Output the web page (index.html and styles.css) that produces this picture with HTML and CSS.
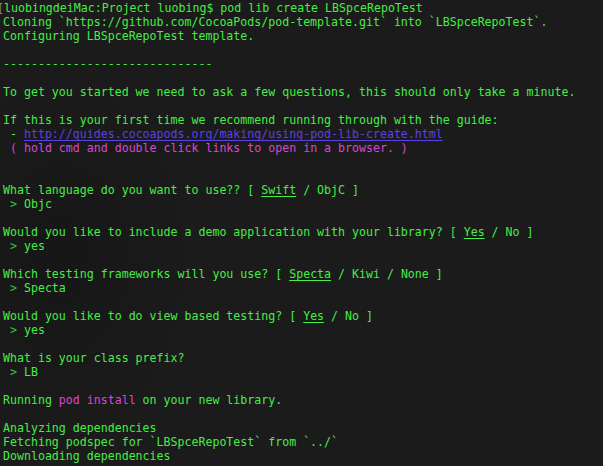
FILE: index.html
```html
<!DOCTYPE html>
<html>
<head>
<meta charset="utf-8">
<link rel="stylesheet" href="styles.css">
</head>
<body>
<pre class="term"><span class="prev">[</span>luobingdeiMac:Project luobing$ pod lib create LBSpceRepoTest
Cloning `https://github.com/CocoaPods/pod-template.git` into `LBSpceRepoTest`.
Configuring LBSpceRepoTest template.

------------------------------

To get you started we need to ask a few questions, this should only take a minute.

If this is your first time we recommend running through with the guide:
 - <span class="link">http://guides.cocoapods.org/making/using-pod-lib-create.html</span>
 <span class="mag">( hold cmd and double click links to open in a browser. )</span>


What language do you want to use?? [ <span class="u">Swift</span> / ObjC ]
 <span class="dim">&gt;</span> Objc

Would you like to include a demo application with your library? [ <span class="u">Yes</span> / No ]
 <span class="dim">&gt;</span> yes

Which testing frameworks will you use? [ <span class="u">Specta</span> / Kiwi / None ]
 <span class="dim">&gt;</span> Specta

Would you like to do view based testing? [ <span class="u">Yes</span> / No ]
 <span class="dim">&gt;</span> yes

What is your class prefix?
 <span class="dim">&gt;</span> LB

Running <span class="mag">pod install</span> on your new library.

Analyzing dependencies
Fetching podspec for `LBSpceRepoTest` from `../`
Downloading dependencies</pre>
</body>
</html>
```

FILE: styles.css
```css
html, body {
  margin: 0;
  padding: 0;
  width: 603px;
  height: 466px;
  overflow: hidden;
  background: #1b1b1b;
}
body {
  background:
    radial-gradient(ellipse 140px 200px at 60px 260px, rgba(0,0,0,0.18), rgba(0,0,0,0) 100%),
    #1b1b1b;
}
.term {
  margin: 0;
  padding: 1px 0 0 3px;
  font-family: "DejaVu Sans Mono", "Liberation Mono", monospace;
  font-size: 11.6px;
  line-height: 14px;
  color: #45ee45;
  white-space: pre;
}
.prev {
  margin-left: -6px;
  color: #7f8f7f;
}
.link {
  color: #5b40e6;
  text-decoration: underline;
  text-underline-offset: 2px;
}
.mag {
  color: #db45d8;
}
.u {
  text-decoration: underline;
  text-underline-offset: 2px;
}
.dim {
  color: #3cc03c;
}
```
